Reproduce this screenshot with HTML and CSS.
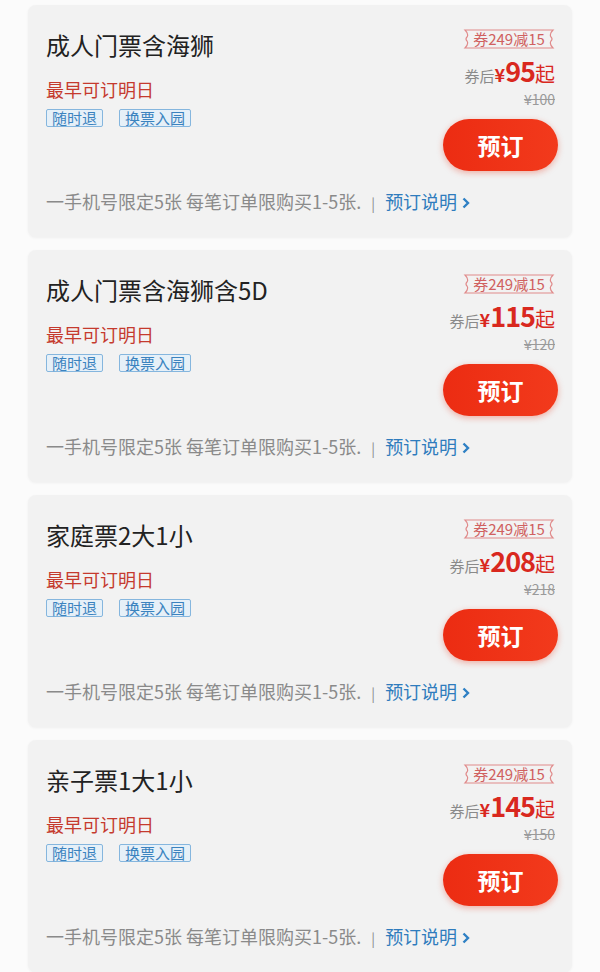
FILE: index.html
```html
<!DOCTYPE html>
<html lang="zh-CN">
<head>
    <meta charset="UTF-8">
    <meta name="viewport" content="width=device-width, initial-scale=1.0">
    <title>门票列表</title>
    <link rel="stylesheet" href="styles.css">
</head>
<body>
    <div class="list">
        <div class="ticket">
            <div class="ticket-main">
                <div class="info">
                    <div class="name">成人门票含海狮</div>
                    <div class="date">最早可订明日</div>
                    <div class="tags"><span class="tag">随时退</span><span class="tag">换票入园</span></div>
                </div>
                <div class="buy">
                    <div class="coupon">
                        <svg class="coupon-bg" viewBox="0 0 92 20" width="92" height="20"><path d="M2 1H90Q86 5 88 8Q90 10 88 12Q86 15 90 19H2Q6 15 4 12Q2 10 4 8Q6 5 2 1Z" fill="none" stroke="#e08a8a" stroke-width="1.2"/></svg>
                        <span>券249减15</span>
                    </div>
                    <div class="price"><span class="after">券后</span><span class="yen">¥</span><span class="num">95</span><span class="qi">起</span></div>
                    <div class="old">¥100</div>
                    <button class="order">预订</button>
                </div>
            </div>
            <div class="note">一手机号限定5张 每笔订单限购买1-5张. <span class="sep">|</span> <span class="link">预订说明<svg width="8" height="12" viewBox="0 0 8 12"><path d="M1.5 1.5L6 6L1.5 10.5" fill="none" stroke="#2f80c4" stroke-width="2.4"/></svg></span></div>
        </div>

        <div class="ticket">
            <div class="ticket-main">
                <div class="info">
                    <div class="name">成人门票含海狮含5D</div>
                    <div class="date">最早可订明日</div>
                    <div class="tags"><span class="tag">随时退</span><span class="tag">换票入园</span></div>
                </div>
                <div class="buy">
                    <div class="coupon">
                        <svg class="coupon-bg" viewBox="0 0 92 20" width="92" height="20"><path d="M2 1H90Q86 5 88 8Q90 10 88 12Q86 15 90 19H2Q6 15 4 12Q2 10 4 8Q6 5 2 1Z" fill="none" stroke="#e08a8a" stroke-width="1.2"/></svg>
                        <span>券249减15</span>
                    </div>
                    <div class="price"><span class="after">券后</span><span class="yen">¥</span><span class="num">115</span><span class="qi">起</span></div>
                    <div class="old">¥120</div>
                    <button class="order">预订</button>
                </div>
            </div>
            <div class="note">一手机号限定5张 每笔订单限购买1-5张. <span class="sep">|</span> <span class="link">预订说明<svg width="8" height="12" viewBox="0 0 8 12"><path d="M1.5 1.5L6 6L1.5 10.5" fill="none" stroke="#2f80c4" stroke-width="2.4"/></svg></span></div>
        </div>

        <div class="ticket">
            <div class="ticket-main">
                <div class="info">
                    <div class="name">家庭票2大1小</div>
                    <div class="date">最早可订明日</div>
                    <div class="tags"><span class="tag">随时退</span><span class="tag">换票入园</span></div>
                </div>
                <div class="buy">
                    <div class="coupon">
                        <svg class="coupon-bg" viewBox="0 0 92 20" width="92" height="20"><path d="M2 1H90Q86 5 88 8Q90 10 88 12Q86 15 90 19H2Q6 15 4 12Q2 10 4 8Q6 5 2 1Z" fill="none" stroke="#e08a8a" stroke-width="1.2"/></svg>
                        <span>券249减15</span>
                    </div>
                    <div class="price"><span class="after">券后</span><span class="yen">¥</span><span class="num">208</span><span class="qi">起</span></div>
                    <div class="old">¥218</div>
                    <button class="order">预订</button>
                </div>
            </div>
            <div class="note">一手机号限定5张 每笔订单限购买1-5张. <span class="sep">|</span> <span class="link">预订说明<svg width="8" height="12" viewBox="0 0 8 12"><path d="M1.5 1.5L6 6L1.5 10.5" fill="none" stroke="#2f80c4" stroke-width="2.4"/></svg></span></div>
        </div>

        <div class="ticket">
            <div class="ticket-main">
                <div class="info">
                    <div class="name">亲子票1大1小</div>
                    <div class="date">最早可订明日</div>
                    <div class="tags"><span class="tag">随时退</span><span class="tag">换票入园</span></div>
                </div>
                <div class="buy">
                    <div class="coupon">
                        <svg class="coupon-bg" viewBox="0 0 92 20" width="92" height="20"><path d="M2 1H90Q86 5 88 8Q90 10 88 12Q86 15 90 19H2Q6 15 4 12Q2 10 4 8Q6 5 2 1Z" fill="none" stroke="#e08a8a" stroke-width="1.2"/></svg>
                        <span>券249减15</span>
                    </div>
                    <div class="price"><span class="after">券后</span><span class="yen">¥</span><span class="num">145</span><span class="qi">起</span></div>
                    <div class="old">¥150</div>
                    <button class="order">预订</button>
                </div>
            </div>
            <div class="note">一手机号限定5张 每笔订单限购买1-5张. <span class="sep">|</span> <span class="link">预订说明<svg width="8" height="12" viewBox="0 0 8 12"><path d="M1.5 1.5L6 6L1.5 10.5" fill="none" stroke="#2f80c4" stroke-width="2.4"/></svg></span></div>
        </div>
    </div>
</body>
</html>
```

FILE: styles.css
```css
body {
    margin: 0;
    background-color: #fbfbfb;
    font-family: "Noto Sans CJK SC", "Noto Sans", sans-serif;
}

.list {
    padding: 5px 28px 0;
}

.ticket {
    background-color: #f2f2f2;
    border-radius: 8px;
    box-shadow: 0 1px 3px rgba(0, 0, 0, 0.05);
    padding: 24px 14px 22px 18px;
    height: 232px;
    box-sizing: border-box;
    margin-bottom: 13px;
}

.ticket-main {
    display: flex;
    justify-content: space-between;
}

.name {
    font-size: 24px;
    line-height: 32px;
    color: #222;
}

.date {
    margin-top: 16px;
    font-size: 18px;
    line-height: 24px;
    color: #c53a2e;
}

.tags {
    margin-top: 8px;
    display: flex;
    gap: 16px;
}

.tag {
    font-size: 15px;
    line-height: 16px;
    padding: 0 5px;
    color: #3b83bf;
    background-color: #e6f0f8;
    border: 1px solid #85b6de;
    border-radius: 2px;
}

.buy {
    display: flex;
    flex-direction: column;
    align-items: flex-end;
}

.coupon {
    position: relative;
    width: 92px;
    height: 20px;
    margin-right: 3px;
    font-size: 15px;
    line-height: 20px;
    color: #d06060;
    text-align: center;
}

.coupon-bg {
    position: absolute;
    left: 0;
    top: 0;
}

.coupon span {
    position: relative;
}

.price {
    margin-top: 8px;
    margin-right: 3px;
    line-height: 28px;
    color: #d9281e;
    display: flex;
    align-items: baseline;
}

.after {
    font-size: 15px;
    color: #8a8a8a;
}

.yen {
    font-size: 18px;
    font-weight: bold;
}

.num {
    font-size: 27px;
    font-weight: bold;
    letter-spacing: -1px;
}

.qi {
    font-size: 20px;
}

.old {
    margin-right: 3px;
    font-size: 14px;
    line-height: 18px;
    color: #9a9a9a;
    text-decoration: line-through;
}

.order {
    margin-top: 11px;
    width: 115px;
    height: 52px;
    border: none;
    border-radius: 26px;
    background: linear-gradient(90deg, #ec2c12, #f23a1c);
    box-shadow: 0 2px 6px rgba(230, 50, 20, 0.35);
    color: #fff;
    font-family: inherit;
    font-size: 23px;
    font-weight: bold;
    cursor: pointer;
}

.note {
    margin-top: 18px;
    font-size: 18px;
    line-height: 24px;
    color: #8a8a8a;
    white-space: nowrap;
}

.sep {
    margin: 0 6px;
    font-size: 14px;
}

.link {
    color: #2f7cbd;
}

.link svg {
    margin-left: 5px;
}
```
